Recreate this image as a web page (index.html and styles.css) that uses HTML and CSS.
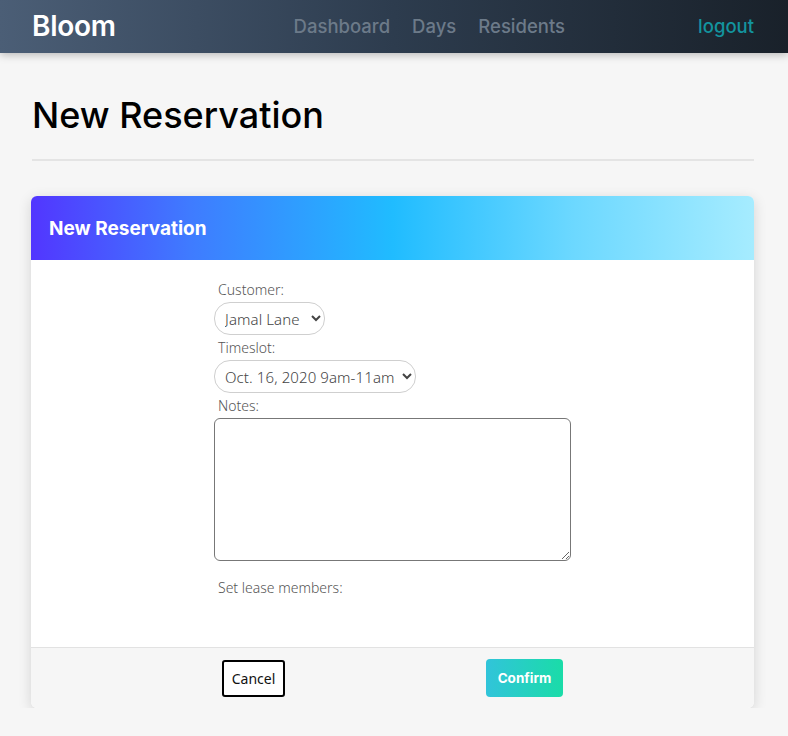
FILE: index.html
```html
<!DOCTYPE html>
<html>
<head>
<meta charset="utf-8">
<link rel="stylesheet" href="styles.css">
</head>
<body>
<header class="navbar">
  <a class="brand">Bloom</a>
  <nav class="nav-links">
    <a>Dashboard</a>
    <a>Days</a>
    <a>Residents</a>
  </nav>
  <a class="logout">logout</a>
</header>
<main class="page">
  <h1 class="page-title">New Reservation</h1>
  <hr class="divider">
  <section class="card">
    <div class="card-header">New Reservation</div>
    <div class="card-body">
      <form class="form">
        <label class="label">Customer:</label>
        <select class="select select-customer"><option>Jamal Lane</option></select>
        <label class="label">Timeslot:</label>
        <select class="select"><option>Oct. 16, 2020 9am-11am</option></select>
        <label class="label">Notes:</label>
        <textarea class="textarea"></textarea>
        <label class="label lease">Set lease members:</label>
      </form>
    </div>
    <div class="card-footer">
      <div class="actions">
        <button class="btn-cancel" type="button">Cancel</button>
        <button class="btn-confirm" type="button">Confirm</button>
      </div>
    </div>
  </section>
</main>
</body>
</html>
```

FILE: styles.css
```css
* { box-sizing: border-box; }
html, body { margin: 0; padding: 0; }
body {
  background: #f6f6f6;
  font-family: "Inter", "Noto Sans", sans-serif;
  color: #111;
}
.navbar {
  height: 53px;
  display: flex;
  align-items: center;
  padding: 0 34px 1px 32px;
  background: linear-gradient(90deg, #4b5e76 0%, #2d3c4e 50%, #19212a 100%);
  box-shadow: 0 2px 8px rgba(0,0,0,0.25);
  position: relative;
}
.brand {
  color: #fff;
  font-size: 28px;
  font-weight: 600;
  letter-spacing: -0.3px;
}
.nav-links {
  display: flex;
  gap: 22px;
  margin-left: 178px;
}
.nav-links a {
  color: #6c7a89;
  font-size: 18.5px;
  font-weight: 500;
}
.logout {
  margin-left: auto;
  color: #13949f;
  font-size: 18.5px;
  font-weight: 500;
}
.page {
  padding: 0 34px 0 32px;
}
.page-title {
  margin: 0;
  padding-top: 40px;
  font-size: 36px;
  font-weight: 500;
  line-height: 44px;
  letter-spacing: 0;
  color: #000;
}
.divider {
  margin: 22px 0 35px;
  border: 0;
  height: 2px;
  background: #e4e4e4;
}
.card {
  margin-left: -1px;
  background: #fff;
  border-radius: 6px;
  box-shadow: 0 3px 14px rgba(0,0,0,0.14);
  overflow: hidden;
}
.card-header {
  height: 64px;
  display: flex;
  align-items: center;
  padding-left: 18px;
  color: #fff;
  font-size: 19px;
  font-weight: 700;
  letter-spacing: 0;
  background: linear-gradient(90deg, #5236ff 0%, #3f7bff 22%, #20bcff 50%, #6cd8ff 75%, #a6ecff 100%);
}
.card-body {
  display: flex;
  justify-content: center;
  padding: 19px 0 47px;
}
.form {
  width: 357px;
  display: flex;
  flex-direction: column;
  align-items: flex-start;
}
.label {
  font-family: "Noto Sans", sans-serif;
  font-size: 14px;
  font-weight: 300;
  color: #555;
  padding-left: 4px;
  line-height: 22px;
  margin-bottom: 1px;
}
.select {
  height: 33px;
  border: 1px solid #cfcfcf;
  border-radius: 16px;
  background: #fff;
  font-family: "Noto Sans", sans-serif;
  font-size: 15px;
  font-weight: 300;
  letter-spacing: 0.1px;
  color: #444;
  padding: 0 4px 0 6px;
  margin-bottom: 2px;
}
.select-customer {
  padding-right: 8px;
}
.textarea {
  width: 357px;
  height: 143px;
  border: 1px solid #777;
  border-radius: 6px;
  margin: 0 0 16px;
  resize: vertical;
}
.card-footer {
  height: 61px;
  border-top: 1px solid #e2e2e2;
  background: #f6f6f6;
  display: flex;
  justify-content: center;
  align-items: center;
}
.actions {
  width: 357px;
  padding: 0 8px;
  display: flex;
  justify-content: space-between;
  align-items: center;
}
.btn-cancel {
  width: 63px;
  height: 37px;
  background: #fff;
  border: 2px solid #000;
  border-radius: 3px;
  font-family: "Noto Sans", sans-serif;
  font-size: 14px;
  font-weight: 400;
  color: #111;
  padding: 0;
}
.btn-confirm {
  width: 77px;
  height: 38px;
  border: 0;
  border-radius: 4px;
  background: linear-gradient(90deg, #31c4da 0%, #1adca8 100%);
  color: #fff;
  font-family: "Inter", sans-serif;
  font-size: 13.5px;
  font-weight: 700;
  padding: 0;
}
```
